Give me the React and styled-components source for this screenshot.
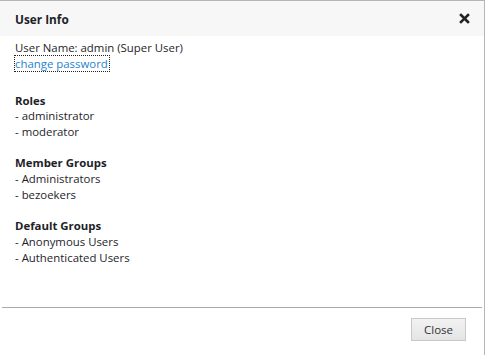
import React from "react";
import styled, { createGlobalStyle } from "styled-components";

const Global = createGlobalStyle`
  html, body { margin: 0; padding: 0; background: #fff; }
  body { font-family: "Open Sans", "Noto Sans", sans-serif; }
`;

const Dialog = styled.div`
  box-sizing: border-box;
  width: 485px;
  height: 355px;
  border-top: 1px solid #b5b5b5;
  border-right: 1px solid #b5b5b5;
  display: flex;
  flex-direction: column;
  background: #fff;
  color: #1e1e28;
`;

const Header = styled.div`
  height: 35px;
  background: #f7f7f7;
  display: flex;
  align-items: center;
  justify-content: space-between;
  padding: 0 14px 0 15px;
  font-size: 11.8px;
  font-weight: 700;
  color: #1e1e28;
`;

const CloseX = styled.button`
  border: 0;
  background: none;
  padding: 0;
  width: 11px;
  height: 11px;
  display: flex;
  cursor: pointer;
`;

const Body = styled.div`
  flex: 1;
  padding: 4px 15px 0;
  font-size: 11.4px;
  line-height: 15.75px;
`;

const Line = styled.div`
  white-space: nowrap;
`;

const Link = styled.a`
  color: #1f83cc;
  text-decoration: none;
  outline: 1px dotted #222;
  outline-offset: 0px;
  padding: 0 1px 0 0;
`;

const Section = styled.div`
  margin-top: ${(p) => p.$gap}px;
`;

const Heading = styled.div`
  font-weight: 700;
`;

const Separator = styled.hr`
  margin: 0 2px 0 2px;
  border: 0;
  border-top: 1px solid #a9a9a9;
  height: 0;
`;

const Footer = styled.div`
  height: 47px;
  display: flex;
  justify-content: flex-end;
  align-items: flex-start;
  padding: 10px 18px 0 0;
  box-sizing: border-box;
`;

const Button = styled.button`
  width: 55px;
  height: 23px;
  border: 1px solid #c9c9c9;
  background: linear-gradient(#f2f2f2, #e4e4e4);
  font-family: "Open Sans", "Noto Sans", sans-serif;
  font-size: 11.5px;
  color: #333;
  padding: 0;
`;

const groups = [
  { title: "Roles", items: ["administrator", "moderator"], gap: 21 },
  { title: "Member Groups", items: ["Administrators", "bezoekers"], gap: 15.5 },
  { title: "Default Groups", items: ["Anonymous Users", "Authenticated Users"], gap: 15.5 },
];

export default function App() {
  return (
    <>
      <Global />
      <Dialog>
        <Header>
          <span>User Info</span>
          <CloseX aria-label="close">
            <svg width="11" height="11" viewBox="0 0 11 11">
              <path d="M2 2 L9 9 M9 2 L2 9" stroke="#222" strokeWidth="2.6" strokeLinecap="square" />
            </svg>
          </CloseX>
        </Header>
        <Body>
          <Line>User Name: admin (Super User)</Line>
          <Line>
            <Link href="#">change password</Link>
          </Line>
          {groups.map((g) => (
            <Section key={g.title} $gap={g.gap}>
              <Heading>{g.title}</Heading>
              {g.items.map((i) => (
                <Line key={i}>- {i}</Line>
              ))}
            </Section>
          ))}
        </Body>
        <Separator />
        <Footer>
          <Button>Close</Button>
        </Footer>
      </Dialog>
    </>
  );
}
